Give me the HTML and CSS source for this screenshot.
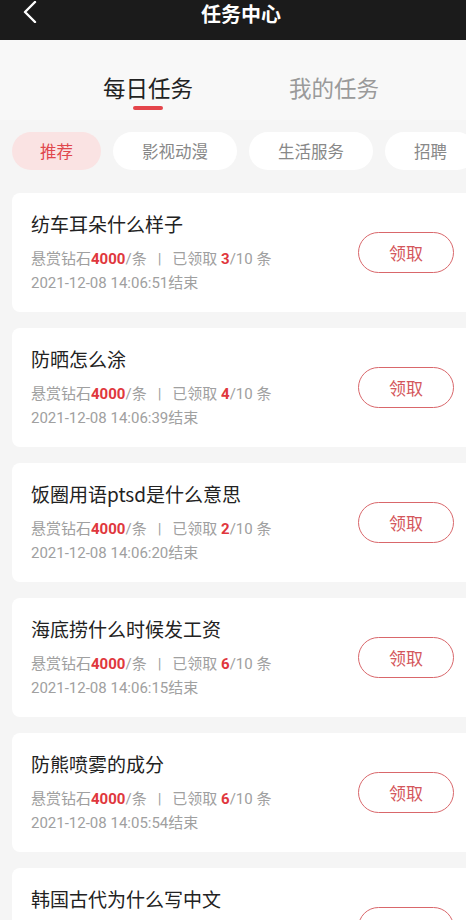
FILE: index.html
```html
<!DOCTYPE html>
<html lang="zh-CN">
<head>
<meta charset="utf-8">
<title>任务中心</title>
<link rel="stylesheet" href="styles.css">
</head>
<body>
<header class="topbar">
  <svg class="back" width="16" height="22" viewBox="0 0 16 22"><polyline points="13,1 3,11 13,21" fill="none" stroke="#fff" stroke-width="2.4" stroke-linecap="round" stroke-linejoin="round"/></svg>
  <div class="title">任务中心</div>
</header>
<nav class="tabs">
  <div class="tab active">每日任务</div>
  <div class="tab">我的任务</div>
</nav>
<div class="chips">
  <div class="chip on">推荐</div>
  <div class="chip">影视动漫</div>
  <div class="chip">生活服务</div>
  <div class="chip">招聘</div>
</div>
<main class="list">
  <div class="card">
    <div class="info">
      <div class="name">纺车耳朵什么样子</div>
      <div class="meta">悬赏钻石<b>4000</b>/条<span class="sep">|</span>已领取 <b>3</b>/10 条</div>
      <div class="date">2021-12-08 14:06:51结束</div>
    </div>
    <div class="btn">领取</div>
  </div>
  <div class="card">
    <div class="info">
      <div class="name">防晒怎么涂</div>
      <div class="meta">悬赏钻石<b>4000</b>/条<span class="sep">|</span>已领取 <b>4</b>/10 条</div>
      <div class="date">2021-12-08 14:06:39结束</div>
    </div>
    <div class="btn">领取</div>
  </div>
  <div class="card">
    <div class="info">
      <div class="name">饭圈用语ptsd是什么意思</div>
      <div class="meta">悬赏钻石<b>4000</b>/条<span class="sep">|</span>已领取 <b>2</b>/10 条</div>
      <div class="date">2021-12-08 14:06:20结束</div>
    </div>
    <div class="btn">领取</div>
  </div>
  <div class="card">
    <div class="info">
      <div class="name">海底捞什么时候发工资</div>
      <div class="meta">悬赏钻石<b>4000</b>/条<span class="sep">|</span>已领取 <b>6</b>/10 条</div>
      <div class="date">2021-12-08 14:06:15结束</div>
    </div>
    <div class="btn">领取</div>
  </div>
  <div class="card">
    <div class="info">
      <div class="name">防熊喷雾的成分</div>
      <div class="meta">悬赏钻石<b>4000</b>/条<span class="sep">|</span>已领取 <b>6</b>/10 条</div>
      <div class="date">2021-12-08 14:05:54结束</div>
    </div>
    <div class="btn">领取</div>
  </div>
  <div class="card">
    <div class="info">
      <div class="name">韩国古代为什么写中文</div>
      <div class="meta">悬赏钻石<b>4000</b>/条<span class="sep">|</span>已领取 <b>5</b>/10 条</div>
      <div class="date">2021-12-08 14:05:30结束</div>
    </div>
    <div class="btn">领取</div>
  </div>
</main>
</body>
</html>
```
FILE: styles.css
```css
* { box-sizing: border-box; }
html, body { margin: 0; padding: 0; }
body {
  background: #f5f5f5;
  font-family: "Noto Sans CJK SC", "Noto Sans", sans-serif;
  color: #222;
  width: 466px;
  height: 920px;
  overflow: hidden;
}
.topbar {
  position: relative;
  height: 40px;
  background: #1b1b1b;
  display: flex;
  justify-content: center;
  align-items: flex-start;
  padding-top: 2px;
}
.back {
  position: absolute;
  left: 22px;
  top: 1px;
}
.title {
  color: #fff;
  font-size: 20px;
  font-weight: 700;
  line-height: 23px;
  margin-left: 16px;
}
.tabs {
  display: flex;
  gap: 96px;
  padding: 31px 0 0 103px;
  height: 80px;
  background: #f8f8f8;
}
.tab {
  position: relative;
  font-size: 22.5px;
  line-height: 32px;
  color: #9a9a9a;
}
.tab.active { color: #222; }
.tab.active::after {
  content: "";
  position: absolute;
  left: 30px;
  top: 35px;
  width: 30px;
  height: 4px;
  border-radius: 2px;
  background: #e4454b;
}
.chips {
  display: flex;
  gap: 12px;
  padding: 12px 0 0 12px;
  height: 73px;
  white-space: nowrap;
}
.chip {
  height: 38px;
  line-height: 38px;
  padding: 0 29px;
  border-radius: 19px;
  background: #fff;
  color: #888;
  font-size: 16.5px;
  flex: none;
}
.chip.on {
  background: #fae3e3;
  color: #e0474c;
  padding: 0 28px;
}
.list {
  display: flex;
  flex-direction: column;
  gap: 16px;
  padding-left: 12px;
  margin-right: -14px;
}
.card {
  height: 119px;
  background: #fff;
  border-radius: 8px;
  display: flex;
  align-items: center;
  justify-content: space-between;
  padding: 0 26px 0 19px;
}
.name {
  font-size: 19px;
  line-height: 26px;
  color: #222;
}
.meta, .date {
  font-family: Roboto, "Noto Sans CJK SC", sans-serif;
  font-size: 15px;
  line-height: 24px;
  color: #a0a0a0;
}
.meta { margin-top: 10px; }
.meta b { color: #e0373d; font-weight: 700; }
.sep { margin: 0 11px; }
.btn {
  width: 96px;
  height: 41px;
  border: 1.5px solid #d9676b;
  border-radius: 21px;
  color: #d4575c;
  font-size: 17px;
  display: flex;
  align-items: center;
  justify-content: center;
  flex: none;
}
```
